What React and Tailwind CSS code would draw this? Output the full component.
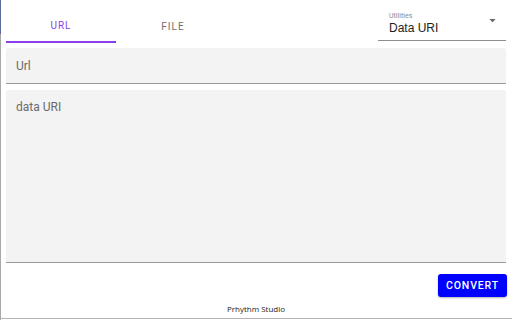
import React from "react";

export default function App() {
  return (
    <div
      className="relative w-[512px] h-[320px] bg-white overflow-hidden"
      style={{ fontFamily: "Roboto, 'Liberation Sans', sans-serif" }}
    >
      <div className="absolute left-0 top-0 w-px h-[34px] bg-[#5a6a9c]" />
      <div className="absolute left-0 top-[34px] w-px h-[286px] bg-[#a8a8a8]" />
      <div className="absolute left-0 bottom-[1px] w-[512px] h-px bg-[#b4b4b4]" />
      <div className="flex flex-col px-[6px]">
        <div className="flex items-end justify-between h-[43px]">
          <div className="flex">
            <div className="w-[110px] h-[33px] flex items-center justify-center border-b-2 border-[#8b3fec] text-[10px] tracking-[0.1em] text-[#8b3fec] font-normal">
              URL
            </div>
            <div className="w-[114px] h-[33px] flex items-center justify-center text-[10px] tracking-[0.1em] text-[#6f6f6f] font-normal">
              FILE
            </div>
          </div>
          <div className="w-[128px] mb-[2px] border-b border-[#8e8e8e] flex items-end justify-between pb-[5px] pl-[11px] pr-[10px]">
            <div className="flex flex-col">
              <span className="text-[7px] leading-[8px] text-[#8a8a8a]">Utilities</span>
              <span className="text-[12px] leading-[14px] text-[#222] mt-[1px]" style={{ fontFamily: "'Liberation Sans', sans-serif" }}>Data URI</span>
            </div>
            <svg width="7" height="4" viewBox="0 0 8 5" className="mb-[12px]">
              <path d="M0 0 L8 0 L4 4 Z" fill="#6a6a6a" />
            </svg>
          </div>
        </div>
        <div className="mt-[5px] h-[36px] bg-[#f3f3f3] border-b border-[#9a9a9a] flex items-center pl-[10px] rounded-t-[3px]">
          <span className="text-[12px] text-[#6a6a6a]">Url</span>
        </div>
        <div className="mt-[6px] h-[173px] bg-[#f3f3f3] border-b border-[#9a9a9a] pl-[10px] pt-[4px] rounded-t-[3px]">
          <span className="text-[12px] text-[#6a6a6a]">data URI</span>
        </div>
        <div className="flex justify-end mt-[11px]">
          <div className="w-[69px] h-[23px] mr-[-1px] bg-[#0000ff] rounded-[3px] flex items-center justify-center text-white text-[10.5px] font-medium tracking-[0.08em] shadow-[0_1px_2px_rgba(0,0,0,0.3)]">
            CONVERT
          </div>
        </div>
        <div className="mt-[6px] text-center text-[8px] text-[#222]" style={{ fontFamily: "'Open Sans', sans-serif" }}>
          Prhythm Studio
        </div>
      </div>
    </div>
  );
}
